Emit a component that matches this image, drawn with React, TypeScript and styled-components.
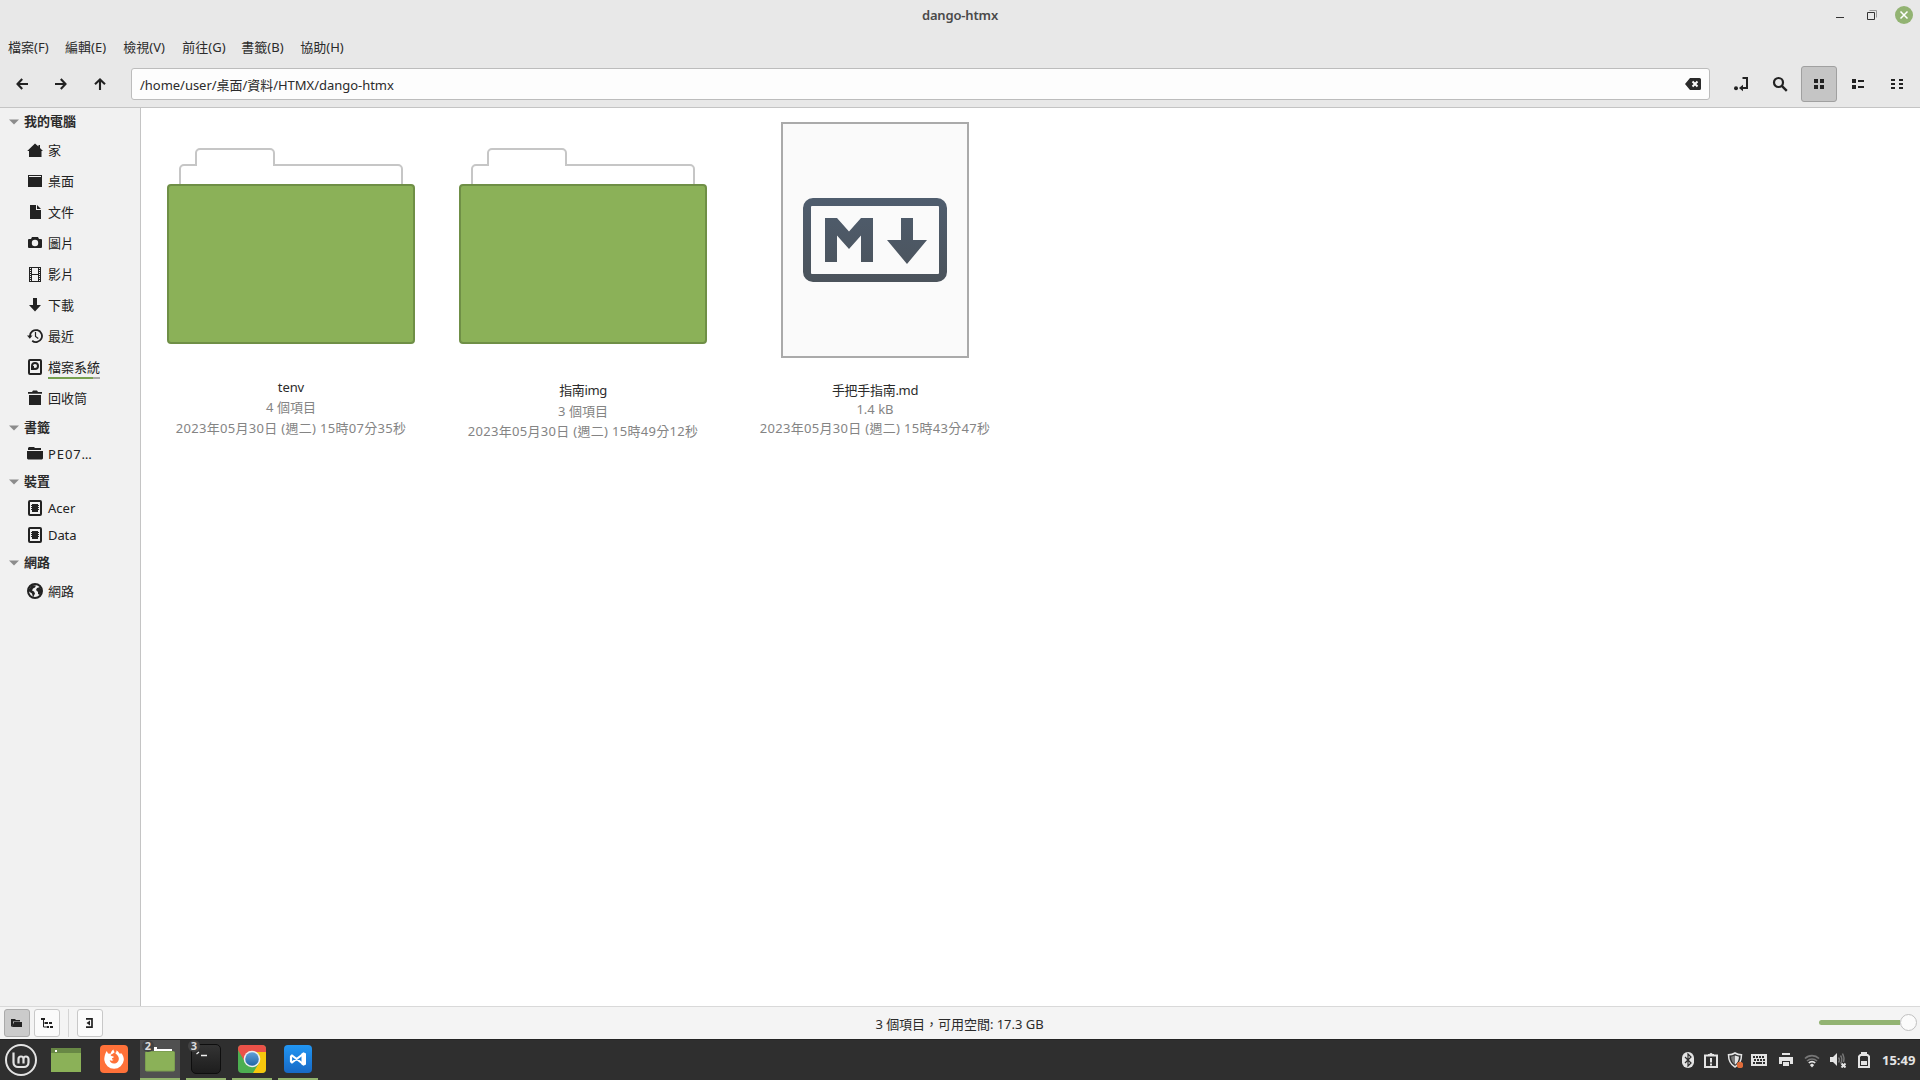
import React from "react";
import styled, { createGlobalStyle } from "styled-components";

const Global = createGlobalStyle`
  * { box-sizing: border-box; }
  body { margin: 0; overflow: hidden; }
  svg { display: block; flex: none; }
`;

const Screen = styled.div`
  width: 1920px;
  height: 1080px;
  display: flex;
  flex-direction: column;
  background: #fff;
  color: #2b2b2b;
  font: 13px/20px "Noto Sans", "Noto Sans CJK TC", sans-serif;
  white-space: nowrap;
  cursor: default;
`;

const Text = styled.span<{ $ls?: number }>`
  display: block;
  letter-spacing: ${(p) => p.$ls ?? 0}px;
`;

/* window header */
const Header = styled.header`
  height: 108px;
  flex: none;
  background: #e8e8e8;
  border-bottom: 1px solid #c4c4c4;
`;
const TitleBar = styled.div`
  height: 30px;
  display: grid;
  grid-template-columns: 1fr auto 1fr;
  align-items: center;
  color: #4a4a4a;
  font-weight: 600;
`;
const WindowControls = styled.div`
  grid-column: 3;
  display: flex;
  justify-content: flex-end;
  align-items: center;
  gap: 14px;
  padding-right: 7px;
`;
const Title = styled(Text)`
  grid-column: 2;
`;
const MenuBar = styled.nav`
  display: grid;
  grid-template-columns: 57px 58.3px 59px 59px 59px auto;
  height: 33px;
  padding-left: 8px;
  align-items: center;
`;
const ToolBar = styled.div`
  display: flex;
  height: 42px;
  align-items: center;
  padding: 0 5px 0 4px;
`;
const Buttons = styled.div`
  display: flex;
  gap: 3px;
`;
const ToolButton = styled.button<{ $active?: boolean }>`
  width: 36px;
  height: 36px;
  padding: 0;
  display: grid;
  place-items: center;
  color: #222;
  border-radius: 3px;
  border: 1px solid ${(p) => (p.$active ? "#a0a0a0" : "transparent")};
  background: ${(p) => (p.$active ? "#c5c5c5" : "transparent")};
`;
const PathEntry = styled.div`
  flex: 1;
  height: 32px;
  margin: 0 13px;
  padding: 0 8px;
  display: flex;
  justify-content: space-between;
  align-items: center;
  border: 1px solid #bcbcbc;
  border-radius: 3px;
  background: #fdfdfd;
`;
const PathText = styled(Text)`
  padding-top: 1px;
`;

/* body */
const Body = styled.div`
  flex: 1;
  display: flex;
`;
const Sidebar = styled.aside`
  width: 141px;
  border-right: 1px solid #c4c4c4;
  background: #f1f1f1;
`;
const Section = styled.div`
  height: 27px;
  display: flex;
  align-items: center;
  gap: 5px;
  padding: 0 0 1px 9px;
  font-weight: 700;

  svg { margin-top: 2px; }
`;
const Place = styled.div<{ $short?: boolean }>`
  height: ${(p) => (p.$short ? 27 : 31)}px;
  display: flex;
  align-items: center;
  gap: 5px;
  padding-left: 27px;
  color: #222;

  svg { margin-bottom: 1px; }
`;
const PlaceLabel = styled(Text)<{ $usage?: boolean }>`
  line-height: 19px;
  padding-top: 2px;
  border-bottom: 2px solid transparent;
  border-image: ${(p) => (p.$usage ? "linear-gradient(90deg,#76a04e 86%,#aaa 86%) 1" : "none")};
`;
const Files = styled.main`
  flex: 1;
  display: flex;
  padding: 8px 0 0 4px;
`;
const FileCell = styled.figure`
  width: 292px;
  margin: 0;
  display: flex;
  flex-direction: column;
  align-items: center;
`;
const FileName = styled(Text)<{ $top: number }>`
  margin-top: ${(p) => p.$top}px;
  line-height: 20px;
`;
const FileInfo = styled(Text)<{ $h: number }>`
  line-height: ${(p) => p.$h}px;
  color: #848484;
`;

/* status bar */
const StatusBar = styled.footer`
  height: 33px;
  flex: none;
  display: grid;
  grid-template-columns: 1fr auto 1fr;
  align-items: center;
  background: #f4f4f4;
  border-top: 1px solid #d9d9d9;
`;
const StatusButtons = styled.div`
  display: flex;
  gap: 4px;
  padding-left: 4px;
`;
const StatusButton = styled.button<{ $active?: boolean }>`
  width: 26px;
  height: 28px;
  padding: 0;
  display: grid;
  place-items: center;
  border-radius: 3px;
  color: #222;
  border: 1px solid ${(p) => (p.$active ? "#aaa" : "#c8c8c8")};
  background: ${(p) => (p.$active ? "#cbcbcb" : "#fbfbfb")};
`;
const Divider = styled.i`
  width: 1px;
  margin: 0 4px;
  background: #d4d4d4;
`;
const StatusText = styled(Text)`
  padding-top: 1px;
  padding-right: 1px;
`;
const Slider = styled.div`
  justify-self: end;
  width: 98px;
  margin: 0 3px 1px 0;
  display: flex;
  align-items: center;
`;
const Track = styled.div`
  flex: 1;
  height: 5px;
  border-radius: 3px 0 0 3px;
  background: #92b372;
`;
const Knob = styled.div`
  width: 17px;
  height: 17px;
  border: 1px solid #c0c0c0;
  border-radius: 50%;
  background: #fbfbfb;
`;

/* panel */
const Panel = styled.div`
  height: 41px;
  flex: none;
  display: flex;
  justify-content: space-between;
  background: #2f2f2f;
  border-top: 1px solid #242424;
`;
const Launchers = styled.div`
  display: flex;
  padding-left: 5px;
  align-items: center;
`;
const Launcher = styled.div<{ $width: number; $lift?: number }>`
  width: ${(p) => p.$width}px;
  height: 40px;
  display: flex;
  align-items: center;
  padding-bottom: ${(p) => p.$lift ?? 0}px;
`;
const Tasks = styled.div`
  display: flex;
  gap: 6px;
`;
const Task = styled.div<{ $active?: boolean }>`
  position: relative;
  width: 40px;
  height: 40px;
  display: flex;
  justify-content: center;
  align-items: center;
  border-bottom: 2px solid #91b36c;
  background: ${(p) => (p.$active ? "#505050" : "transparent")};
`;
const Count = styled.span`
  position: absolute;
  left: 2px;
  top: 0;
  width: 12px;
  height: 12px;
  border-radius: 6px;
  background: #424242;
  color: #ddd;
  font: 700 11px/12px "Noto Sans", sans-serif;
  text-align: center;
`;
const Tray = styled.div`
  display: flex;
  align-items: center;
  padding-right: 4px;
  color: #e4e4e4;
`;
const TraySlot = styled.div<{ $gap: number }>`
  margin-right: ${(p) => p.$gap}px;
`;
const Clock = styled(Text)`
  width: 34px;
  font-weight: 700;
`;

const F = ({ w = 16, h = 16, children }: { w?: number; h?: number; children: React.ReactNode }) => (
  <svg width={w} height={h} viewBox={`0 0 ${w} ${h}`} fill="currentColor">{children}</svg>
);
const line = { fill: "none", stroke: "currentColor", strokeWidth: 2 };

const ArrowLeft = () => <F><path d="M14 8H4M8.2 3L3.5 8l4.7 5" {...line} strokeWidth={2.1} /></F>;
const ArrowRight = () => <F><path d="M2 8h10M7.8 3l4.7 5-4.7 5" {...line} strokeWidth={2.1} /></F>;
const ArrowUp = () => <F><path d="M8 14V4M3 8.2l5-4.7 5 4.7" {...line} strokeWidth={2.1} /></F>;
const ClearIcon = () => (
  <F><path d="M5 2h9.5A1.5 1.5 0 0116 3.500v9a1.500 1.500 0 01-1.500 1.500H5L0 8z" /><path d="M7.500 5.500l5 5m0-5l-5 5" stroke="#fdfdfd" strokeWidth="2" /></F>
);
const EnterIcon = () => (
  <F><circle cx="3" cy="12.200" r="2" /><path d="M9.500 2H14v10H9" {...line} /><path d="M6 12l4-3.300v6.600z" /></F>
);
const SearchIcon = () => <F><circle cx="6.500" cy="6.500" r="4.500" {...line} strokeWidth={2.2} /><path d="M9.800 9.800l5 5" {...line} strokeWidth={2.400} /></F>;
const GridIcon = () => <F><path d="M3 3h4v4H3zM9 3h4v4H9zM3 9h4v4H3zM9 9h4v4H9z" /></F>;
const ListIcon = () => <F><path d="M2 3h4v4H2zM2 9h4v4H2zM8 4h6v2H8zM8 10h6v2H8z" /></F>;
const CompactIcon = () => <F><path d="M2 3h4v2H2zM2 7h4v2H2zM2 11h4v2H2zM10 3h4v2h-4zM10 7h4v2h-4zM10 11h4v2h-4z" /></F>;

const Caret = () => <F w={10} h={6}><path d="M0 .5h10L5 5.500z" fill="#8c8c8c" /></F>;
const HomeIcon = () => <F><path d="M8 1.500l3.500 3V3H13v3l3 3h-1.500v6H2V9H.2z" /></F>;
const DesktopIcon = () => <F><path d="M1 2h14v12H1z" /><path d="M2 3.500h12" stroke="#f1f1f1" /></F>;
const DocIcon = () => <F><path d="M3 1h6v5h5v9H3z" /><path d="M10 1l4 4h-4z" /></F>;
const CameraIcon = () => <F><path fillRule="evenodd" d="M5 2h6l1 2h2a1 1 0 011 1v7a1 1 0 01-1 1H2a1 1 0 01-1-1V5a1 1 0 011-1h2zM8 4.800a3.200 3.200 0 100 6.400 3.200 3.200 0 000-6.400z" /></F>;
const FilmIcon = () => (
  <F><path fillRule="evenodd" d="M2 1h12v15H2zM5 2v6h6V2zM5 9v6h6V9z" />
    <path d="M3.500 2v13M12.500 2v13" stroke="#f1f1f1" strokeDasharray="1 1" /></F>
);
const DownIcon = () => <F><path d="M6 1h4v7h4l-6 6.500L2 8h4z" /></F>;
const RecentIcon = () => <F><path d="M3 8a6 6 0 11 2.200 4.700" {...line} strokeWidth={1.800} /><path d="M0 7.500h5.500L2.800 10.800z" /><path d="M8.500 4v4.500l2.800 2" {...line} strokeWidth={1.200} /></F>;
const DriveIcon = () => <F><rect x="2" y="1" width="12" height="14" rx="1" {...line} /><circle cx="8" cy="7" r="3" {...line} /><path d="M4 7h3v4H4z" /></F>;
const TrashIcon = () => <F><path d="M1 2h4l1-1.500h4L11 2h4v1.800H1zM2 5h12v10H2z" /></F>;
const FolderIcon = () => <F><path d="M1 3V2l1-1h5l1 1h6v2H1zM0 5h16v7.500l-1 1H1l-1-1z" /></F>;
const DiskIcon = () => <F><rect x="2" y="1" width="12" height="14" rx="1" {...line} /><path d="M5 4h6v8H5z" /><path d="M4.500 5v6M11.500 5v6" stroke="currentColor" strokeDasharray="1 1" /></F>;
const GlobeIcon = () => <F><circle cx="8" cy="8" r="7" {...line} /><path d="M2 6l3-4 4 .5-1 2-2 1-1 2 2 1 1 2-2 4-1-4-3-2zM10 5l3-1 2 4-2 4-2-1v-2l-2-2z" /></F>;

const BigFolder = () => (
  <svg width="256" height="256" viewBox="0 0 256 256">
    <path d="M17 70V53a4 4 0 014-4h12V37a4 4 0 014-4h70a4 4 0 014 4v12h124a4 4 0 014 4v17" fill="#fff" stroke="#c6c6c6" strokeWidth="2" />
    <rect x="5" y="69" width="246" height="158" rx="3" fill="#8bb158" stroke="#6f8f46" strokeWidth="2" />
  </svg>
);
const MarkdownFile = () => (
  <svg width="256" height="256" viewBox="0 0 256 256">
    <defs><linearGradient id="slate" x1="0" y1="0" x2="0" y2="1"><stop offset="0" stopColor="#4f5d6e" /><stop offset="1" stopColor="#4b535b" /></linearGradient></defs>
    <rect x="35" y="7" width="186" height="234" fill="#fafafa" stroke="#aaa" strokeWidth="2" />
    <path fill="url(#slate)" fillRule="evenodd" d="M66 82h124a10 10 0 0110 10v64a10 10 0 01-10 10H66a10 10 0 01-10-10V92a10 10 0 0110-10zM65 90a1 1 0 00-1 1v66a1 1 0 001 1h126a1 1 0 001-1V91a1 1 0 00-1-1zM78 102h12l12 13.500L114 102h12v44h-12v-26.500L102 133 90 119.500V146H78zM154 102h12v22h14l-20 24-20-24h14z" />
  </svg>
);

const MintLogo = () => (
  <svg width="32" height="32" viewBox="0 0 32 32" fill="none" stroke="#e3e3e3">
    <circle cx="16" cy="16" r="15" strokeWidth="2" />
    <path d="M8.500 8.500v10a4.500 4.500 0 004.500 4.500h6a4.500 4.500 0 004.500-4.500V15a2.500 2.500 0 00-5 0v4.500M18.500 15a2.500 2.500 0 00-5 0v4.500" strokeWidth="2.200" />
  </svg>
);
const DesktopLauncher = () => <svg width="30" height="24"><rect width="30" height="24" fill="#8bb158" /><rect width="30" height="5" fill="#688845" /><rect x="4" y="2" width="2" height="2" fill="#fff" /></svg>;
const Firefox = () => (
  <svg width="28" height="28" viewBox="0 0 28 28"><rect width="28" height="28" rx="4" fill="#ff7139" />
    <path fill="#fff" d="M4.500 12C5 9 6 7 6.800 6l1.200 2.500 2.500.3c.5-1.800 1.500-3.500 3-4.300 0 1.500 1 2.500 2 3.500 1-.5 1-1.500.8-2.500C18 6 19 7.500 20 9l1-1C23 10 24 12.500 23.800 15a9.800 9.800 0 01-19.500 0c0-1 0-2 .2-3z" />
    <path fill="#ff7139" d="M10.500 10c1.500-1 3-1.200 4-3 .5 1.500 3.500 2.500 4.300 6 .4 3.500-2 5.500-4.800 5.500-2.500 0-4-1.500-4.300-3.500 1.500 1 3 .8 4-.3-1.500 0-2-.7-1.600-1.500l1.800-1-.7-1c-1.200.2-2.100-.2-2.700-1.200z" /></svg>
);
const FolderTask = () => <svg width="30" height="28"><path d="M9 7V2h3v2h15v3z" fill="#fff" /><rect x=".5" y="6.500" width="29" height="19.500" rx="1" fill="#8bb158" stroke="#7c9f50" /></svg>;
const Terminal = () => (
  <svg width="30" height="30"><defs><linearGradient id="term" x1="0" y1="0" x2="0" y2="1"><stop stopColor="#343434" /><stop offset="1" stopColor="#1d1d1d" /></linearGradient></defs>
    <rect x=".5" y=".5" width="29" height="29" rx="4.500" fill="url(#term)" stroke="#0e0e0e" /><path d="M5.500 10l2.500-2M10 11.500h6" stroke="#eee" strokeWidth="1.300" /></svg>
);
const Chrome = () => (
  <svg width="28" height="28" viewBox="0 0 28 28"><defs><clipPath id="cr"><rect width="28" height="28" rx="4" /></clipPath><linearGradient id="cb" x1="0" y1="0" x2="0" y2="1"><stop stopColor="#63a0d8" /><stop offset="1" stopColor="#2166a5" /></linearGradient></defs>
    <g clipPath="url(#cr)"><path fill="#4caf50" d="M0 0h28v28H0z" /><path fill="#f6c70d" d="M14 7h14v21H15l6-10z" /><path fill="#ea5148" d="M0 0h28v7H14L7 17 0 5z" /></g>
    <circle cx="14" cy="14" r="8.300" fill="#eee" /><circle cx="14" cy="14" r="6.800" fill="url(#cb)" /></svg>
);
const Code = () => (
  <svg width="28" height="28" viewBox="0 0 28 28"><defs><linearGradient id="vs" x1="0" y1="0" x2="0" y2="1"><stop stopColor="#2196f3" /><stop offset="1" stopColor="#1769c5" /></linearGradient></defs>
    <rect width="28" height="28" rx="4" fill="url(#vs)" />
    <path d="M18.500 9.500L8 17.500 7 16.500v-5l1-1 10.500 8" fill="none" stroke="#fff" strokeWidth="2.200" strokeLinejoin="round" />
    <path fill="#fff" d="M17.500 8.500l2-1.300L22 8.500v11l-2.500 1.300-2-1.300z" /></svg>
);

const Bluetooth = () => <F w={12}><rect width="12" height="16" rx="5.800" /><path d="M3 5l6 6-3 3V2l3 3-6 6" fill="none" stroke="#2f2f2f" strokeWidth="1.200" /></F>;
const Report = () => <F w={14}><path d="M1 3.500h12V15H1z" {...line} /><path d="M4 2h1.500a1.600 1.600 0 013 0H10v2H4zM6 6h2v4.500H6zM6 11.500h2v2H6z" /></F>;
const Shield = () => <F><path d="M8 1c2 1.300 4.500 1.800 6.500 1.800 0 6-2 9.700-6.500 12.200C3.500 12.500 1.500 8.800 1.500 2.800 3.500 2.800 6 2.300 8 1z" {...line} strokeWidth={1.500} /><path d="M8 3.500v9.300C5.500 11 4.200 8.500 4 4.800z" fill="#777" /><path d="M8 3.500v9.300c2.500-1.800 3.800-4.300 4-8z" /><circle cx="13" cy="13" r="3.200" fill="#e06c3a" /></F>;
const Keyboard = () => <F><path d="M0 2h16v12H0z" /><path d="M2 5h12M3 8h11" stroke="#2f2f2f" strokeWidth="2" strokeDasharray="2 1" /><path d="M2 11h2M5 11h6M12 11h2" stroke="#2f2f2f" strokeWidth="2" /></F>;
const Printer = () => <F w={14}><path d="M3 1h8v2H3zM0 5h14v7h-3V9H3v3H0zM4 10h6v4H4z" /></F>;
const Wifi = () => <F><path d="M1 6.500a10 10 0 0114 0M3 9a7.200 7.200 0 0110 0" fill="none" stroke="#777" strokeWidth="1.700" /><path d="M4.800 11a4.500 4.500 0 016.400 0" {...line} strokeWidth={1.700} /><path d="M8 11.500l2.200 1.500L8 15.500 5.800 13z" /></F>;
const Volume = () => <F><path d="M0 5h3l4-4v13L3 10H0z" /><path d="M8.500 5.500a4 4 0 010 5M10.500 3.500a7 7 0 010 8M12.500 1.500a11 11 0 011 8.500" fill="none" stroke="#777" strokeWidth="1.400" /><path d="M11.500 11.500l4 4m0-4l-4 4" {...line} /></F>;
const Battery = () => <F w={12}><path fillRule="evenodd" d="M3 0h6v2h1l2 2v12H0V4l2-2h1zM2 5v9h8V5l-1-1H3z" /><path d="M3 9h6v4H3z" /></F>;

const places: [React.FC, string, boolean?][] = [
  [HomeIcon, "家"], [DesktopIcon, "桌面"], [DocIcon, "文件"], [CameraIcon, "圖片"], [FilmIcon, "影片"],
  [DownIcon, "下載"], [RecentIcon, "最近"], [DriveIcon, "檔案系統", true], [TrashIcon, "回收筒"],
];
const menus = ["檔案(F)", "編輯(E)", "檢視(V)", "前往(G)", "書籤(B)", "協助(H)"];
const files = [
  { Icon: BigFolder, name: "tenv", ls: -0.1, info: "4 個項目", date: "2023年05月30日 (週二) 15時07分35秒", top: 5, h: 21, dh: 20 },
  { Icon: BigFolder, name: "指南img", ls: -0.4, info: "3 個項目", date: "2023年05月30日 (週二) 15時49分12秒", top: 8, h: 22, dh: 19 },
  { Icon: MarkdownFile, name: "手把手指南.md", ls: -0.3, info: "1.4 kB", date: "2023年05月30日 (週二) 15時43分47秒", top: 8, h: 18, dh: 20 },
];
const tray: [React.FC, number][] = [[Bluetooth, 10], [Report, 9], [Shield, 8], [Keyboard, 12], [Printer, 11], [Wifi, 10], [Volume, 12], [Battery, 12]];

export default function App() {
  return (
    <Screen>
      <Global />
      <Header>
        <TitleBar>
          <Title $ls={-0.15}>dango-htmx</Title>
          <WindowControls>
            <F w={18} h={18}><path d="M5 11.500h8" stroke="#333" /></F>
            <F w={18} h={18}><path d="M4.500 6.500h7v7h-7z" fill="none" stroke="#333" /><path d="M6.500 4.500h7v7" fill="none" stroke="#999" /></F>
            <F w={18} h={18}><circle cx="9" cy="9" r="9" fill="#92b372" /><path d="M5.500 5.500l7 7m0-7l-7 7" stroke="#fff" strokeWidth="1.500" /></F>
          </WindowControls>
        </TitleBar>
        <MenuBar>{menus.map((m) => <Text key={m}>{m}</Text>)}</MenuBar>
        <ToolBar>
          <Buttons>
            <ToolButton><ArrowLeft /></ToolButton>
            <ToolButton><ArrowRight /></ToolButton>
            <ToolButton><ArrowUp /></ToolButton>
          </Buttons>
          <PathEntry><PathText $ls={-0.03}>/home/user/桌面/資料/HTMX/dango-htmx</PathText><ClearIcon /></PathEntry>
          <Buttons>
            <ToolButton><EnterIcon /></ToolButton>
            <ToolButton><SearchIcon /></ToolButton>
            <ToolButton $active><GridIcon /></ToolButton>
            <ToolButton><ListIcon /></ToolButton>
            <ToolButton><CompactIcon /></ToolButton>
          </Buttons>
        </ToolBar>
      </Header>
      <Body>
        <Sidebar>
          <Section><Caret /><Text>我的電腦</Text></Section>
          {places.map(([Icon, name, usage]) => <Place key={name}><Icon /><PlaceLabel $usage={usage}>{name}</PlaceLabel></Place>)}
          <Section><Caret /><Text>書籤</Text></Section>
          <Place $short><FolderIcon /><PlaceLabel $ls={0.9}>PE07…</PlaceLabel></Place>
          <Section><Caret /><Text>裝置</Text></Section>
          <Place $short><DiskIcon /><PlaceLabel>Acer</PlaceLabel></Place>
          <Place $short><DiskIcon /><PlaceLabel $ls={-0.1}>Data</PlaceLabel></Place>
          <Section><Caret /><Text>網路</Text></Section>
          <Place><GlobeIcon /><PlaceLabel>網路</PlaceLabel></Place>
        </Sidebar>
        <Files>
          {files.map(({ Icon, name, ls, info, date, top, h, dh }) => (
            <FileCell key={name}>
              <Icon />
              <FileName $top={top} $ls={ls}>{name}</FileName>
              <FileInfo $h={h}>{info}</FileInfo>
              <FileInfo $h={dh} $ls={0.3}>{date}</FileInfo>
            </FileCell>
          ))}
        </Files>
      </Body>
      <StatusBar>
        <StatusButtons>
          <StatusButton $active><F w={12} h={12}><path d="M0 2h4l1 1h4v1.500H2V8L0 10zM3 5h8v5H1z" /></F></StatusButton>
          <StatusButton><F w={12} h={12}><path d="M0 1h4v2H0zM4 5h3v2H4zM8 5h3v2H8zM6 9h2v2H6zM9 9h3v2H9z" /><path d="M2.500 2v8H7M2.500 6H6" {...line} strokeWidth={1} /></F></StatusButton>
          <Divider />
          <StatusButton><F w={12} h={12}><path d="M2 1.800h6v8.400H2" {...line} strokeWidth={1.700} /><path d="M2.500 6l3.500-2.500v5z" /></F></StatusButton>
        </StatusButtons>
        <StatusText $ls={-0.03}>3 個項目，可用空間: 17.3 GB</StatusText>
        <Slider><Track /><Knob /></Slider>
      </StatusBar>
      <Panel>
        <Launchers>
          <Launcher $width={46}><MintLogo /></Launcher>
          <Launcher $width={49}><DesktopLauncher /></Launcher>
          <Launcher $width={40} $lift={2}><Firefox /></Launcher>
          <Tasks>
            <Task $active><FolderTask /><Count>2</Count></Task>
            <Task><Terminal /><Count>3</Count></Task>
            <Task><Chrome /></Task>
            <Task><Code /></Task>
          </Tasks>
        </Launchers>
        <Tray>
          {tray.map(([Icon, gap], i) => <TraySlot key={i} $gap={gap}><Icon /></TraySlot>)}
          <Clock>15:49</Clock>
        </Tray>
      </Panel>
    </Screen>
  );
}
